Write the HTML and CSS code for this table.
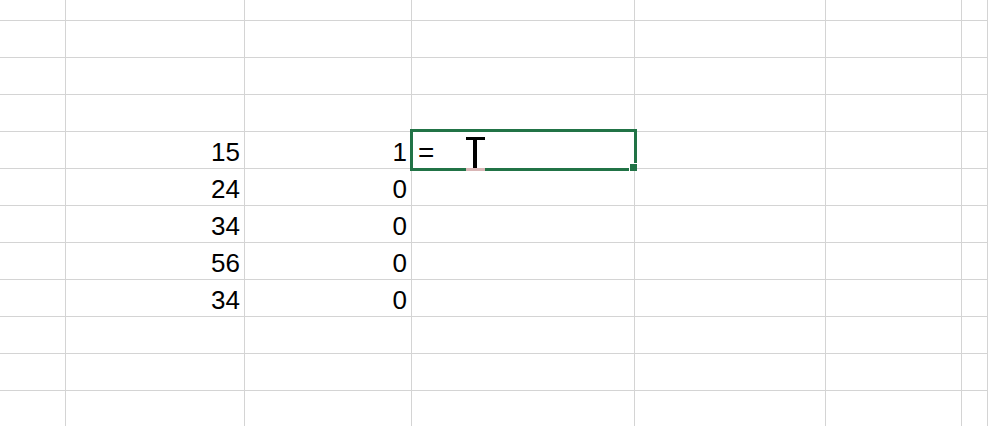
FILE: index.html
```html
<!DOCTYPE html>
<html>
<head>
<meta charset="utf-8">
<link rel="stylesheet" href="styles.css">
</head>
<body>
<div class="sheet">
  <!-- row 0 -->
  <div class="c"></div><div class="c"></div><div class="c"></div><div class="c"></div><div class="c"></div><div class="c"></div><div class="c"></div>
  <!-- row 1 -->
  <div class="c"></div><div class="c"></div><div class="c"></div><div class="c"></div><div class="c"></div><div class="c"></div><div class="c"></div>
  <!-- row 2 -->
  <div class="c"></div><div class="c"></div><div class="c"></div><div class="c"></div><div class="c"></div><div class="c"></div><div class="c"></div>
  <!-- row 3 -->
  <div class="c"></div><div class="c"></div><div class="c"></div><div class="c"></div><div class="c"></div><div class="c"></div><div class="c"></div>
  <!-- row 4 -->
  <div class="c"></div><div class="c num">15</div><div class="c num">1</div>
  <div class="c txt active"><span class="eq">=</span>
    <div class="selection"></div>
    <div class="handle"></div>
    <svg class="ibeam" width="20" height="36" viewBox="0 0 20 36">
      <rect x="0" y="0" width="19" height="3" fill="#000"/>
      <rect x="7" y="3" width="4" height="28" fill="#000"/>
      <rect x="0" y="31" width="19" height="3" fill="#d9b6b6"/>
    </svg>
  </div>
  <div class="c"></div><div class="c"></div><div class="c"></div>
  <!-- row 5 -->
  <div class="c"></div><div class="c num">24</div><div class="c num">0</div><div class="c"></div><div class="c"></div><div class="c"></div><div class="c"></div>
  <!-- row 6 -->
  <div class="c"></div><div class="c num">34</div><div class="c num">0</div><div class="c"></div><div class="c"></div><div class="c"></div><div class="c"></div>
  <!-- row 7 -->
  <div class="c"></div><div class="c num">56</div><div class="c num">0</div><div class="c"></div><div class="c"></div><div class="c"></div><div class="c"></div>
  <!-- row 8 -->
  <div class="c"></div><div class="c num">34</div><div class="c num">0</div><div class="c"></div><div class="c"></div><div class="c"></div><div class="c"></div>
  <!-- row 9 -->
  <div class="c"></div><div class="c"></div><div class="c"></div><div class="c"></div><div class="c"></div><div class="c"></div><div class="c"></div>
  <!-- row 10 -->
  <div class="c"></div><div class="c"></div><div class="c"></div><div class="c"></div><div class="c"></div><div class="c"></div><div class="c"></div>
  <!-- row 11 -->
  <div class="c"></div><div class="c"></div><div class="c"></div><div class="c"></div><div class="c"></div><div class="c"></div><div class="c"></div>
</div>
</body>
</html>
```

FILE: styles.css
```css
html, body {
  margin: 0;
  padding: 0;
  background: #fff;
  overflow: hidden;
}

.sheet {
  display: grid;
  grid-template-columns: 66px 179px 167px 223px 191px 136px 1fr;
  grid-template-rows: 21px repeat(10, 37px) 36px;
  width: 988px;
  font-family: "Liberation Sans", Arial, sans-serif;
  font-size: 26px;
  color: #000;
}

.c {
  box-sizing: border-box;
  border-right: 1px solid #d4d4d4;
  border-bottom: 1px solid #d4d4d4;
  line-height: 25px;
  display: flex;
  align-items: flex-end;
  padding-bottom: 3px;
}

.num {
  justify-content: flex-end;
  padding-right: 4px;
}

.txt {
  padding-left: 6px;
}

.eq {
  font-size: 28px;
  font-weight: 300;
}

.active {
  position: relative;
}

.selection {
  position: absolute;
  left: -2px;
  top: -3px;
  width: 227px;
  height: 42px;
  box-sizing: border-box;
  border: 3px solid #217346;
}

.handle {
  position: absolute;
  left: 217px;
  top: 31px;
  width: 7px;
  height: 7px;
  background: #217346;
  border-top: 1px solid #fff;
  border-left: 1px solid #fff;
}

.ibeam {
  position: absolute;
  left: 54px;
  top: 5px;
}
```
